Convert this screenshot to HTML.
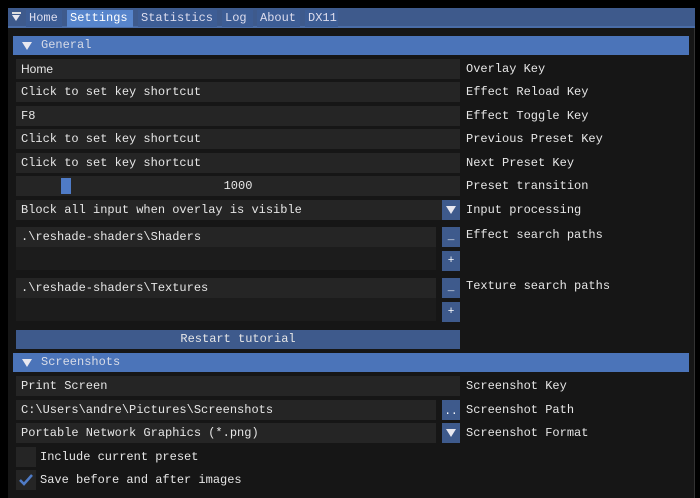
<!DOCTYPE html><html><head><style>
body{margin:0;width:700px;height:494px;background:#000;overflow:hidden;font-family:"Liberation Mono",monospace;font-size:12px;color:#e6e6e6;position:relative}
div{position:absolute;box-sizing:border-box}
.win{left:8px;top:8px;width:687px;height:490px;background:#161616;border-right:1px solid #333}
.bar{left:8px;top:8px;width:687px;height:19px;background:#3e5a8c}
.tab{top:10px;height:17px;background:#3d5d95;line-height:17px;padding-left:3px;font-family:"Liberation Mono",monospace;font-size:12px;color:#dde;white-space:pre}
.hdr{left:13px;width:676px;height:19px;background:#4b74b9;line-height:19px;padding-left:28px;color:#d8dce8}
.f{left:16px;width:444px;height:20px;background:#252525;line-height:20px;padding-left:5px;white-space:pre}
.l{left:466px;line-height:20px;height:20px}
.btn{left:442px;width:18px;height:20px;background:#3e5a8c;color:#fff;text-align:center;line-height:20px;font-size:11px}
.tri{width:0;height:0;border-left:5px solid transparent;border-right:5px solid transparent;border-top:8px solid #e8e8f0}
</style></head><body>
<div class="win"></div>
<div class="bar"></div>
<div style="left:8px;top:26px;width:687px;height:2px;background:#4a6da8"></div>
<div style="left:12px;top:12px;width:9px;height:2px;background:#ddd"></div>
<div class="tri" style="left:12px;top:15px;border-left-width:4.5px;border-right-width:4.5px;border-top-width:6px"></div>
<div class="tab" style="left:26px;width:36px">Home</div>
<div class="tab" style="left:67px;width:66px;background:#5785cc;color:#fff">Settings</div>
<div class="tab" style="left:138px;width:79px">Statistics</div>
<div class="tab" style="left:222px;width:31px">Log</div>
<div class="tab" style="left:257px;width:43px">About</div>
<div class="tab" style="left:305px;width:33px">DX11</div>

<div class="hdr" style="top:36px">General</div>
<div class="tri" style="left:22px;top:42px"></div>
<div class="f" style="top:59px;font-family:'Liberation Sans',sans-serif">Home</div><div class="l" style="top:59px">Overlay Key</div>
<div class="f" style="top:82px">Click to set key shortcut</div><div class="l" style="top:82px">Effect Reload Key</div>
<div class="f" style="top:106px">F8</div><div class="l" style="top:106px">Effect Toggle Key</div>
<div class="f" style="top:129px">Click to set key shortcut</div><div class="l" style="top:129px">Previous Preset Key</div>
<div class="f" style="top:153px">Click to set key shortcut</div><div class="l" style="top:153px">Next Preset Key</div>
<div class="f" style="top:176px;text-align:center;padding:0">1000</div><div class="l" style="top:176px">Preset transition</div>
<div style="left:61px;top:178px;width:10px;height:16px;background:#4f7bc6"></div>
<div class="f" style="top:200px">Block all input when overlay is visible</div><div class="l" style="top:200px">Input processing</div>
<div class="btn" style="top:200px"></div><div class="tri" style="left:446px;top:206px"></div>
<div style="left:16px;top:227px;width:420px;height:43px;background:#1c1c1c"></div>
<div class="f" style="top:227px;width:420px">.\reshade-shaders\Shaders</div>
<div class="btn" style="top:227px">_</div><div class="l" style="top:225px">Effect search paths</div>
<div class="btn" style="top:251px">+</div>
<div style="left:16px;top:278px;width:420px;height:43px;background:#1c1c1c"></div>
<div class="f" style="top:278px;width:420px">.\reshade-shaders\Textures</div>
<div class="btn" style="top:278px">_</div><div class="l" style="top:276px">Texture search paths</div>
<div class="btn" style="top:302px">+</div>
<div class="f" style="top:330px;background:#3e5a8c;text-align:center;padding:0;height:19px;line-height:19px">Restart tutorial</div>

<div class="hdr" style="top:353px">Screenshots</div>
<div class="tri" style="left:22px;top:359px"></div>
<div class="f" style="top:376px">Print Screen</div><div class="l" style="top:376px">Screenshot Key</div>
<div class="f" style="top:400px;width:420px">C:\Users\andre\Pictures\Screenshots</div>
<div class="btn" style="top:400px;line-height:24px">..</div><div class="l" style="top:400px">Screenshot Path</div>
<div class="f" style="top:423px;width:420px">Portable Network Graphics (*.png)</div>
<div class="btn" style="top:423px"></div><div class="tri" style="left:446px;top:429px"></div>
<div class="l" style="top:423px">Screenshot Format</div>
<div style="left:16px;top:447px;width:20px;height:20px;background:#252525"></div>
<div class="l" style="left:40px;top:447px">Include current preset</div>
<div style="left:16px;top:470px;width:20px;height:20px;background:#252525"></div>
<svg style="position:absolute;left:18px;top:473px" width="16" height="14"><path d="M2 7 L6 11 L14 2" stroke="#4f7bc6" stroke-width="2.5" fill="none"/></svg>
<div class="l" style="left:40px;top:470px">Save before and after images</div>
</body></html>
